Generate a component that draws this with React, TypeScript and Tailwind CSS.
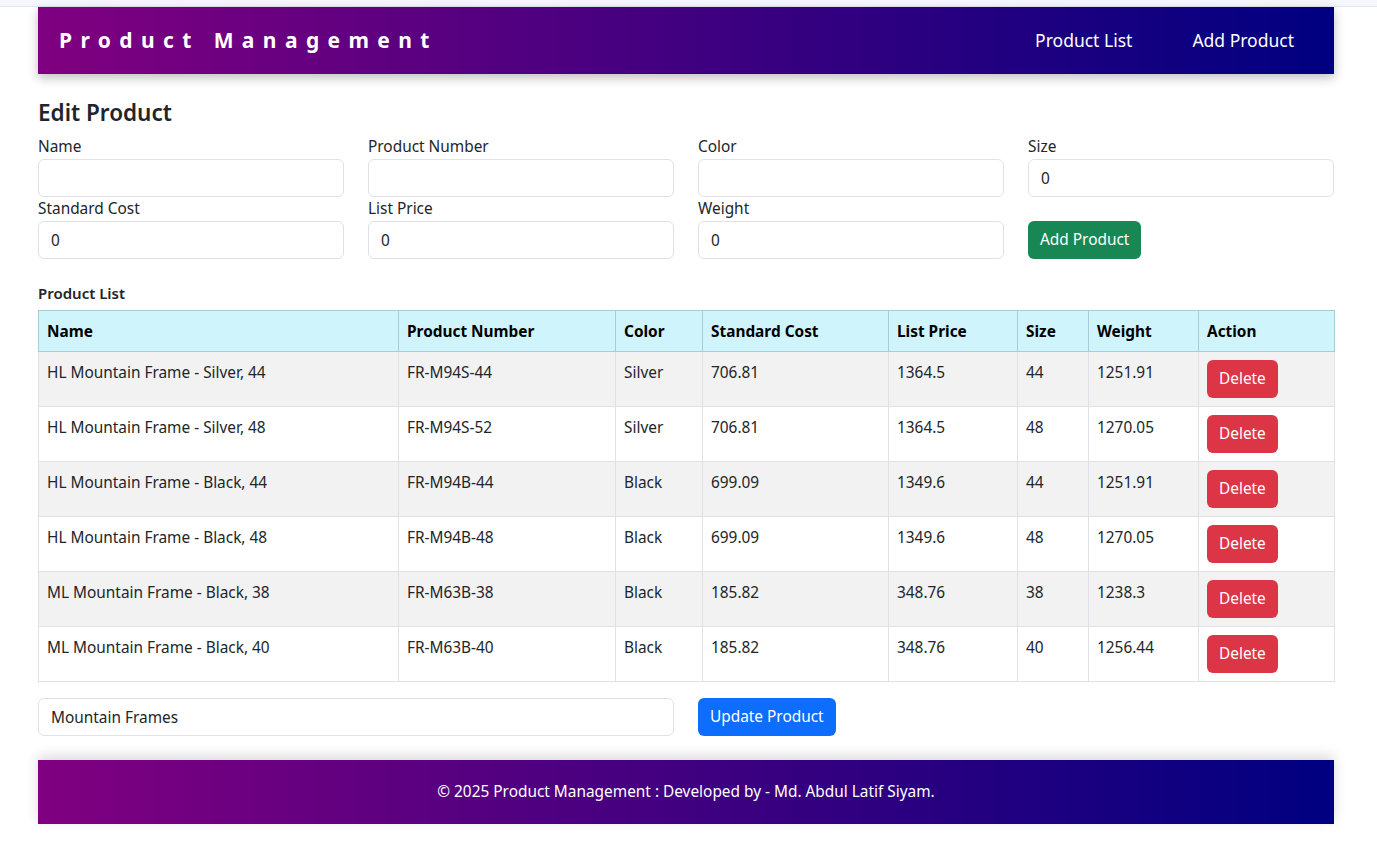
import React from 'react';

interface Product {
  name: string;
  number: string;
  color: string;
  cost: string;
  price: string;
  size: string;
  weight: string;
}

const products: Product[] = [
  { name: 'HL Mountain Frame - Silver, 44', number: 'FR-M94S-44', color: 'Silver', cost: '706.81', price: '1364.5', size: '44', weight: '1251.91' },
  { name: 'HL Mountain Frame - Silver, 48', number: 'FR-M94S-52', color: 'Silver', cost: '706.81', price: '1364.5', size: '48', weight: '1270.05' },
  { name: 'HL Mountain Frame - Black, 44', number: 'FR-M94B-44', color: 'Black', cost: '699.09', price: '1349.6', size: '44', weight: '1251.91' },
  { name: 'HL Mountain Frame - Black, 48', number: 'FR-M94B-48', color: 'Black', cost: '699.09', price: '1349.6', size: '48', weight: '1270.05' },
  { name: 'ML Mountain Frame - Black, 38', number: 'FR-M63B-38', color: 'Black', cost: '185.82', price: '348.76', size: '38', weight: '1238.3' },
  { name: 'ML Mountain Frame - Black, 40', number: 'FR-M63B-40', color: 'Black', cost: '185.82', price: '348.76', size: '40', weight: '1256.44' },
];

const columns = [
  { label: 'Name', w: 'w-[360px]' },
  { label: 'Product Number', w: 'w-[217px]' },
  { label: 'Color', w: 'w-[87px]' },
  { label: 'Standard Cost', w: 'w-[186px]' },
  { label: 'List Price', w: 'w-[129px]' },
  { label: 'Size', w: 'w-[71px]' },
  { label: 'Weight', w: 'w-[110px]' },
  { label: 'Action', w: 'w-[136px]' },
];

const Field: React.FC<{ label: string; value?: string }> = ({ label, value = '' }) => (
  <div className="flex flex-col">
    <label className="text-[15.4px] leading-[24px] text-[#212529]">{label}</label>
    <input
      readOnly
      value={value}
      className="h-[38px] w-full rounded-[6px] border border-[#dee2e6] bg-white px-[12px] text-[15.4px] text-[#212529] outline-none"
    />
  </div>
);

export default function App() {
  return (
    <div className="min-h-[847px] bg-white text-[#212529]" style={{ fontFamily: '"Segoe UI", "Noto Sans", sans-serif' }}>
      <div className="h-[7px] border-b border-[#e3e6ef] bg-[#f5f7fc]" />

      <div className="ml-[38px] w-[1296px]">
        <header className="flex h-[67px] items-center justify-between bg-linear-to-r/srgb from-[#800080] to-[#000080] pl-[21px] pr-[40px] shadow-[0_4px_10px_rgba(0,0,0,0.25)]">
          <h1 className="text-[21px] font-bold tracking-[8.4px] text-white">Product Management</h1>
          <nav className="flex items-center gap-[60px] text-[17.5px] text-white">
            <a>Product List</a>
            <a>Add Product</a>
          </nav>
        </header>

        <h3 className="mt-[24px] mb-[8px] text-[22.5px] font-semibold leading-[29px] text-[#212529]">Edit Product</h3>

        <div className="grid grid-cols-4 gap-x-[24px]">
          <Field label="Name" />
          <Field label="Product Number" />
          <Field label="Color" />
          <Field label="Size" value="0" />
          <Field label="Standard Cost" value="0" />
          <Field label="List Price" value="0" />
          <Field label="Weight" value="0" />
          <div className="flex items-end">
            <button className="h-[38px] rounded-[6px] bg-[#198754] px-[12px] text-[15.4px] text-white">Add Product</button>
          </div>
        </div>

        <div className="mt-[23px] mb-[6px] text-[15px] font-semibold leading-[22px]">Product List</div>

        <table className="w-[1296px] table-fixed border-collapse text-[15.4px]">
          <thead>
            <tr className="bg-[#cff4fc]">
              {columns.map((c) => (
                <th key={c.label} className={`${c.w} border border-[#a6cdd6] px-[8px] pt-[9px] pb-[7px] text-left font-bold leading-[24px] text-black`}>
                  {c.label}
                </th>
              ))}
            </tr>
          </thead>
          <tbody>
            {products.map((p, i) => (
              <tr key={p.name} className={i % 2 === 0 ? 'bg-[#f2f2f2]' : 'bg-white'}>
                {[p.name, p.number, p.color, p.cost, p.price, p.size, p.weight].map((v, j) => (
                  <td key={j} className="border border-[#dee2e6] px-[8px] pt-[9px] pb-[7px] align-top leading-[24px]">
                    {v}
                  </td>
                ))}
                <td className="border border-[#dee2e6] px-[8px] py-[8px] align-top">
                  <button className="h-[38px] rounded-[6px] bg-[#dc3545] px-[12px] text-[15.4px] text-white">Delete</button>
                </td>
              </tr>
            ))}
          </tbody>
        </table>

        <div className="mt-[16px] grid grid-cols-2 gap-x-[24px]">
          <input
            readOnly
            value="Mountain Frames"
            className="h-[38px] w-full rounded-[6px] border border-[#dee2e6] px-[12px] text-[15.4px] text-[#212529] outline-none"
          />
          <div>
            <button className="h-[38px] rounded-[6px] bg-[#0d6efd] px-[12px] text-[15.4px] text-white">Update Product</button>
          </div>
        </div>

        <footer className="mt-[24px] flex h-[64px] items-center justify-center bg-linear-to-r/srgb from-[#800080] to-[#000080] text-[15.4px] text-white shadow-[0_-4px_12px_rgba(0,0,0,0.15)]">
          © 2025 Product Management : Developed by - Md. Abdul Latif Siyam.
        </footer>
      </div>
    </div>
  );
}
